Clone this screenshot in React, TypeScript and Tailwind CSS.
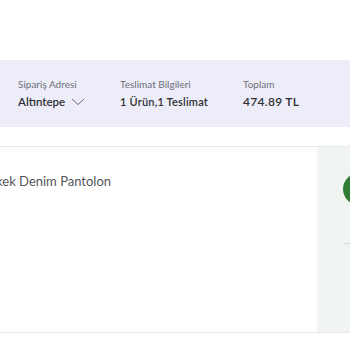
import React from "react";

export default function App() {
  return (
    <div className="w-[350px] h-[350px] overflow-hidden bg-white flex flex-col" style={{ fontFamily: "Lato, 'Open Sans', sans-serif" }}>
      <div className="h-[60px] shrink-0" />
      <div className="h-[67px] shrink-0 bg-[#ecedf8] flex items-center pl-[18px]">
        <div className="w-[102px] flex flex-col gap-[3px]">
          <span className="text-[10px] leading-[13px] text-[#6f7078]">Sipariş Adresi</span>
          <span className="flex items-center gap-[6px] text-[11.5px] leading-[16px] font-semibold text-[#2f3035]">
            Altıntepe
            <svg width="14" height="8" viewBox="0 0 14 8" fill="none">
              <path d="M1 1l6 5.5L13 1" stroke="#6a6b72" strokeWidth="1" />
            </svg>
          </span>
        </div>
        <div className="w-[123px] flex flex-col gap-[3px]">
          <span className="text-[10px] leading-[13px] text-[#6f7078]">Teslimat Bilgileri</span>
          <span className="text-[11px] leading-[16px] font-semibold text-[#2f3035] tracking-[0.2px]">1 Ürün,1 Teslimat</span>
        </div>
        <div className="flex flex-col gap-[3px]">
          <span className="text-[10px] leading-[13px] text-[#6f7078]">Toplam</span>
          <span className="text-[12px] leading-[16px] font-semibold text-[#2f3035] tracking-[0.3px]">474.89 TL</span>
        </div>
      </div>
      <div className="h-[19px] shrink-0" />
      <div className="h-[187px] shrink-0 border-y border-[#e8e8ea] flex">
        <div className="flex-1 overflow-hidden pt-[26px]">
          <div className="-ml-[16px] whitespace-nowrap text-[13px] leading-[17px] text-[#555559]">Erkek Denim Pantolon</div>
        </div>
        <div className="w-px bg-[#f3f3f3]" />
        <div className="w-[32px] bg-[#f1f5f2] pt-[26px] pl-[25px] flex flex-col">
          <div className="w-[32px] h-[32px] shrink-0 rounded-full bg-[#2e7d32]" />
          <div className="mt-[38px] h-px w-[20px] bg-[#d6d9d7]" />
        </div>
      </div>
    </div>
  );
}
